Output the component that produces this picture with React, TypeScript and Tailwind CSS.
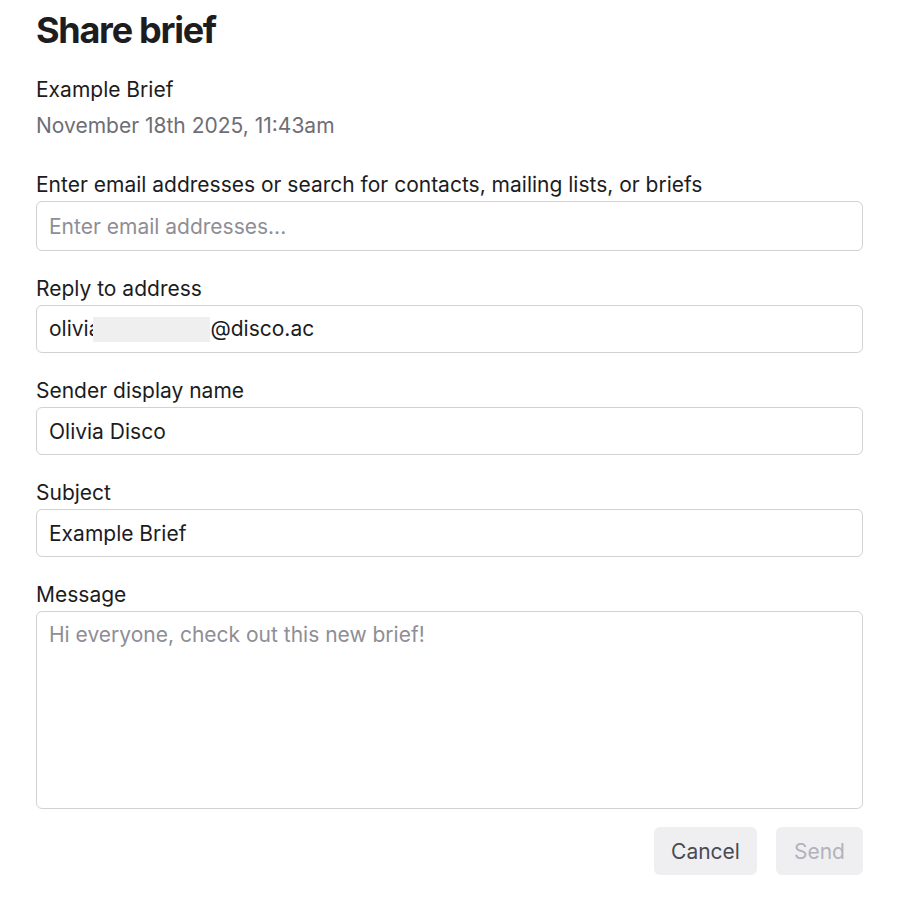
import React from 'react';

const font = { fontFamily: 'Inter, "Noto Sans", sans-serif' };

const Label: React.FC<{ children: React.ReactNode }> = ({ children }) => (
  <label className="block text-[21px] leading-[24px] text-[#1c1c1e] mb-1">{children}</label>
);

const inputCls =
  'w-full h-[48px] rounded-[6px] border border-[#d1d1d6] bg-white px-3 text-[21px] text-[#1c1c1e] placeholder:text-[#8e8e96] outline-none';

export default function App() {
  return (
    <div className="min-h-[901px] bg-white pl-9 pr-[34px] pt-[8px]" style={font}>
      <h1 className="text-[36px] leading-[44px] font-bold text-[#1d1d1f] tracking-[-0.035em]">Share brief</h1>

      <div className="mt-[24px] text-[21px] leading-[28px] text-[#1c1c1e]">Example Brief</div>
      <div className="mt-[8px] text-[21px] leading-[28px] text-[#6e6e76]">November 18th 2025, 11:43am</div>

      <div className="mt-[33px] flex flex-col gap-[26px]">
        <div>
          <Label>Enter email addresses or search for contacts, mailing lists, or briefs</Label>
          <input className={inputCls + ' h-[50px]'} placeholder="Enter email addresses..." />
        </div>

        <div>
          <Label>Reply to address</Label>
          <div className="flex items-center w-full h-[48px] rounded-[6px] border border-[#d1d1d6] bg-white px-3 text-[21px] text-[#1c1c1e]">
            <span>olivia</span>
            <span className="-ml-[7px] inline-block w-[117px] h-[25px] bg-[#efefef]" />
            <span>@disco.ac</span>
          </div>
        </div>

        <div>
          <Label>Sender display name</Label>
          <input className={inputCls} defaultValue="Olivia Disco" />
        </div>

        <div>
          <Label>Subject</Label>
          <input className={inputCls} defaultValue="Example Brief" />
        </div>

        <div>
          <Label>Message</Label>
          <textarea
            className="block w-full h-[198px] resize-none rounded-[6px] border border-[#d1d1d6] bg-white px-3 py-[10px] text-[21px] leading-[26px] text-[#1c1c1e] placeholder:text-[#8e8e96] outline-none"
            placeholder="Hi everyone, check out this new brief!"
          />
        </div>
      </div>

      <div className="mt-[18px] flex justify-end gap-[19px]">
        <button className="h-[48px] w-[103px] pt-[2px] rounded-[6px] bg-[#efeff1] text-[21px] text-[#4a4a54]">Cancel</button>
        <button className="h-[48px] w-[87px] pt-[2px] rounded-[6px] bg-[#efeff1] text-[21px] text-[#b2b2bd]" disabled>
          Send
        </button>
      </div>
    </div>
  );
}
